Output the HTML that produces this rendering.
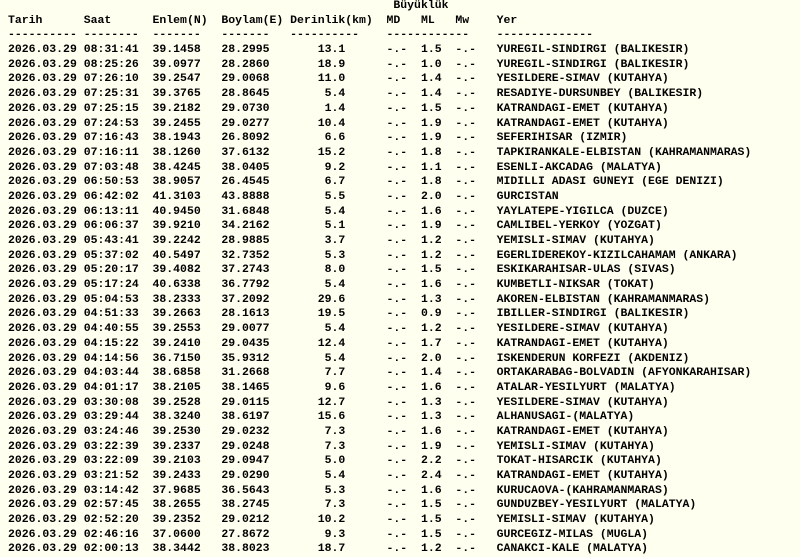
<!DOCTYPE html>
<html><head><meta charset="utf-8"><style>
html,body{margin:0;padding:0;background:#fffff0;width:800px;height:554px;overflow:hidden}
pre{position:absolute;left:8px;top:-1px;margin:0;font-family:"Liberation Mono",monospace;font-weight:bold;font-size:11.48px;line-height:14.68px;color:#000;white-space:pre}
</style></head><body><pre>                                                        Büyüklük
Tarih      Saat      Enlem(N)  Boylam(E) Derinlik(km)  MD   ML   Mw    Yer
---------- --------  -------   -------   ----------    ------------    --------------
2026.03.29 08:31:41  39.1458   28.2995       13.1      -.-  1.5  -.-   YUREGIL-SINDIRGI (BALIKESIR)
2026.03.29 08:25:26  39.0977   28.2860       18.9      -.-  1.0  -.-   YUREGIL-SINDIRGI (BALIKESIR)
2026.03.29 07:26:10  39.2547   29.0068       11.0      -.-  1.4  -.-   YESILDERE-SIMAV (KUTAHYA)
2026.03.29 07:25:31  39.3765   28.8645        5.4      -.-  1.4  -.-   RESADIYE-DURSUNBEY (BALIKESIR)
2026.03.29 07:25:15  39.2182   29.0730        1.4      -.-  1.5  -.-   KATRANDAGI-EMET (KUTAHYA)
2026.03.29 07:24:53  39.2455   29.0277       10.4      -.-  1.9  -.-   KATRANDAGI-EMET (KUTAHYA)
2026.03.29 07:16:43  38.1943   26.8092        6.6      -.-  1.9  -.-   SEFERIHISAR (IZMIR)
2026.03.29 07:16:11  38.1260   37.6132       15.2      -.-  1.8  -.-   TAPKIRANKALE-ELBISTAN (KAHRAMANMARAS)
2026.03.29 07:03:48  38.4245   38.0405        9.2      -.-  1.1  -.-   ESENLI-AKCADAG (MALATYA)
2026.03.29 06:50:53  38.9057   26.4545        6.7      -.-  1.8  -.-   MIDILLI ADASI GUNEYI (EGE DENIZI)
2026.03.29 06:42:02  41.3103   43.8888        5.5      -.-  2.0  -.-   GURCISTAN
2026.03.29 06:13:11  40.9450   31.6848        5.4      -.-  1.6  -.-   YAYLATEPE-YIGILCA (DUZCE)
2026.03.29 06:06:37  39.9210   34.2162        5.1      -.-  1.9  -.-   CAMLIBEL-YERKOY (YOZGAT)
2026.03.29 05:43:41  39.2242   28.9885        3.7      -.-  1.2  -.-   YEMISLI-SIMAV (KUTAHYA)
2026.03.29 05:37:02  40.5497   32.7352        5.3      -.-  1.2  -.-   EGERLIDEREKOY-KIZILCAHAMAM (ANKARA)
2026.03.29 05:20:17  39.4082   37.2743        8.0      -.-  1.5  -.-   ESKIKARAHISAR-ULAS (SIVAS)
2026.03.29 05:17:24  40.6338   36.7792        5.4      -.-  1.6  -.-   KUMBETLI-NIKSAR (TOKAT)
2026.03.29 05:04:53  38.2333   37.2092       29.6      -.-  1.3  -.-   AKOREN-ELBISTAN (KAHRAMANMARAS)
2026.03.29 04:51:33  39.2663   28.1613       19.5      -.-  0.9  -.-   IBILLER-SINDIRGI (BALIKESIR)
2026.03.29 04:40:55  39.2553   29.0077        5.4      -.-  1.2  -.-   YESILDERE-SIMAV (KUTAHYA)
2026.03.29 04:15:22  39.2410   29.0435       12.4      -.-  1.7  -.-   KATRANDAGI-EMET (KUTAHYA)
2026.03.29 04:14:56  36.7150   35.9312        5.4      -.-  2.0  -.-   ISKENDERUN KORFEZI (AKDENIZ)
2026.03.29 04:03:44  38.6858   31.2668        7.7      -.-  1.4  -.-   ORTAKARABAG-BOLVADIN (AFYONKARAHISAR)
2026.03.29 04:01:17  38.2105   38.1465        9.6      -.-  1.6  -.-   ATALAR-YESILYURT (MALATYA)
2026.03.29 03:30:08  39.2528   29.0115       12.7      -.-  1.3  -.-   YESILDERE-SIMAV (KUTAHYA)
2026.03.29 03:29:44  38.3240   38.6197       15.6      -.-  1.3  -.-   ALHANUSAGI-(MALATYA)
2026.03.29 03:24:46  39.2530   29.0232        7.3      -.-  1.6  -.-   KATRANDAGI-EMET (KUTAHYA)
2026.03.29 03:22:39  39.2337   29.0248        7.3      -.-  1.9  -.-   YEMISLI-SIMAV (KUTAHYA)
2026.03.29 03:22:09  39.2103   29.0947        5.0      -.-  2.2  -.-   TOKAT-HISARCIK (KUTAHYA)
2026.03.29 03:21:52  39.2433   29.0290        5.4      -.-  2.4  -.-   KATRANDAGI-EMET (KUTAHYA)
2026.03.29 03:14:42  37.9685   36.5643        5.3      -.-  1.6  -.-   KURUCAOVA-(KAHRAMANMARAS)
2026.03.29 02:57:45  38.2655   38.2745        7.3      -.-  1.5  -.-   GUNDUZBEY-YESILYURT (MALATYA)
2026.03.29 02:52:20  39.2352   29.0212       10.2      -.-  1.5  -.-   YEMISLI-SIMAV (KUTAHYA)
2026.03.29 02:46:16  37.0600   27.8672        9.3      -.-  1.5  -.-   GURCEGIZ-MILAS (MUGLA)
2026.03.29 02:00:13  38.3442   38.8023       18.7      -.-  1.2  -.-   CANAKCI-KALE (MALATYA)
</pre></body></html>
